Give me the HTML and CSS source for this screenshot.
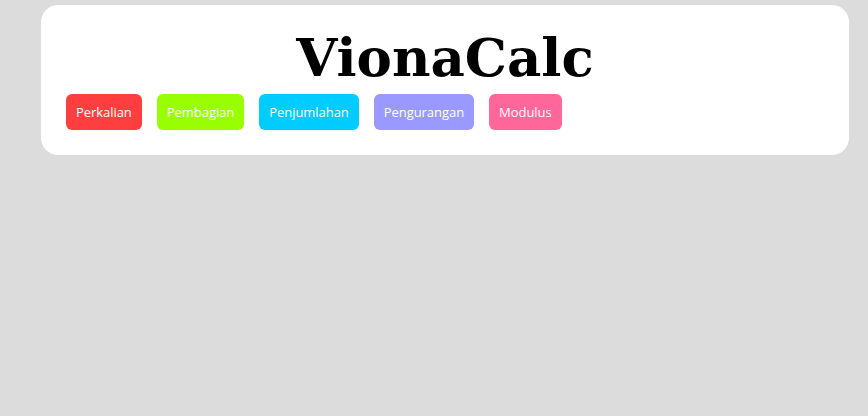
FILE: index.html
```html
<!DOCTYPE html>
<html>
<head>
<meta charset="utf-8">
<link rel="stylesheet" href="styles.css">
</head>
<body>
<div class="card">
  <h1 class="title">VionaCalc</h1>
  <div class="menu">
    <button class="btn red">Perkalian</button>
    <button class="btn green">Pembagian</button>
    <button class="btn cyan">Penjumlahan</button>
    <button class="btn purple">Pengurangan</button>
    <button class="btn pink">Modulus</button>
  </div>
</div>
</body>
</html>
```
FILE: styles.css
```css
html, body { margin: 0; padding: 0; }
body {
  background: #dcdcdc;
  height: 416px;
  padding-top: 5px;
  box-sizing: border-box;
}
.card {
  margin-left: 41px;
  width: 808px;
  height: 150px;
  box-sizing: border-box;
  background: #fff;
  border-radius: 17px;
  padding: 22px 25px 0 25px;
}
.title {
  margin: 0;
  text-align: center;
  font-family: "DejaVu Serif", serif;
  font-weight: bold;
  font-size: 53px;
  line-height: 60px;
  height: 60px;
  color: #000;
}
.menu {
  display: flex;
  gap: 15px;
  margin-top: 7px;
}
.btn {
  border: none;
  border-radius: 6px;
  height: 36px;
  padding: 0 10px;
  color: #fff;
  font-family: "Open Sans", sans-serif;
  font-size: 13px;
  letter-spacing: -0.05px;
}
.red { background: #ff3f3f; }
.green { background: #99ff00; }
.cyan { background: #00ccff; }
.purple { background: #9999ff; }
.pink { background: #ff6699; }
```
